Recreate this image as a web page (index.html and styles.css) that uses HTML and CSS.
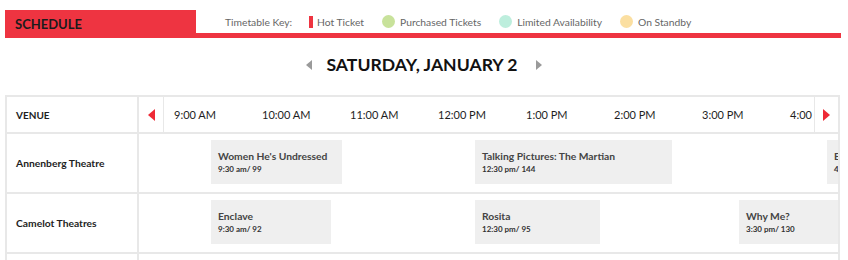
FILE: index.html
```html
<!DOCTYPE html>
<html lang="en">
<head>
<meta charset="utf-8">
<title>Schedule</title>
<link rel="stylesheet" href="styles.css">
</head>
<body>
<header class="topbar">
  <div class="brand">SCHEDULE</div>
  <div class="key">
    <span class="key-label">Timetable Key:</span>
    <span class="key-item"><span class="mark bar"></span>Hot Ticket</span>
    <span class="key-item"><span class="mark dot green"></span>Purchased Tickets</span>
    <span class="key-item"><span class="mark dot teal"></span>Limited Availability</span>
    <span class="key-item"><span class="mark dot yellow"></span>On Standby</span>
  </div>
</header>

<div class="datebar">
  <span class="nav-tri left"></span>
  <h1 class="date">SATURDAY, JANUARY 2</h1>
  <span class="nav-tri right"></span>
</div>

<div class="grid">
  <div class="row head">
    <div class="venue">VENUE</div>
    <div class="arrow-cell first"><span class="red-tri left"></span></div>
    <div class="times">
      <span class="time">9:00 AM</span>
      <span class="time">10:00 AM</span>
      <span class="time">11:00 AM</span>
      <span class="time">12:00 PM</span>
      <span class="time">1:00 PM</span>
      <span class="time">2:00 PM</span>
      <span class="time">3:00 PM</span>
      <span class="time">4:00 PM</span>
    </div>
    <div class="arrow-cell last"><span class="red-tri right"></span></div>
  </div>

  <div class="row">
    <div class="venue">Annenberg Theatre</div>
    <div class="track">
      <div class="event" style="margin-left:72px;width:131px"><div class="title">Women He's Undressed</div><div class="meta">9:30 am/ 99</div></div>
      <div class="event" style="margin-left:133px;width:197px"><div class="title">Talking Pictures: The Martian</div><div class="meta">12:30 pm/ 144</div></div>
      <div class="event" style="margin-left:155px;width:120px"><div class="title">Brooklyn</div><div class="meta">4:30 pm/ 111</div></div>
    </div>
  </div>

  <div class="row">
    <div class="venue">Camelot Theatres</div>
    <div class="track">
      <div class="event" style="margin-left:72px;width:120px"><div class="title">Enclave</div><div class="meta">9:30 am/ 92</div></div>
      <div class="event" style="margin-left:144px;width:125px"><div class="title">Rosita</div><div class="meta">12:30 pm/ 95</div></div>
      <div class="event" style="margin-left:139px;width:140px"><div class="title">Why Me?</div><div class="meta">3:30 pm/ 130</div></div>
    </div>
  </div>

  <div class="row">
    <div class="venue">Mary Pickford Theatre</div>
    <div class="track">
      <div class="event" style="margin-left:115px;width:129px"><div class="title">Mustang</div><div class="meta">10:00 am/ 97</div></div>
    </div>
  </div>
</div>
</body>
</html>
```

FILE: styles.css
```css
* { box-sizing: border-box; }

html, body {
  margin: 0;
  padding: 0;
  background: #ffffff;
}

body {
  font-family: Lato, "Open Sans", "Liberation Sans", sans-serif;
  color: #222;
  width: 848px;
  height: 260px;
  overflow: hidden;
}

/* ---------- top bar ---------- */
.topbar {
  display: flex;
  margin: 10px 0 0 5px;
  width: 836px;
  height: 28px;
}

.brand {
  width: 191px;
  height: 28px;
  background: #ee3441;
  color: #1b1b1b;
  font-weight: 700;
  font-size: 13px;
  line-height: 28px;
  padding-left: 10px;
}

.key {
  flex: 1;
  height: 28px;
  border-bottom: 5px solid #ee3441;
  display: flex;
  align-items: center;
  padding-left: 29px;
  font-size: 10.3px;
  color: #666;
}

.key-label { margin-right: 17px; }

.key-item {
  display: flex;
  align-items: center;
  margin-right: 18px;
}

.mark { display: inline-block; margin-right: 4px; }

.bar {
  width: 4px;
  height: 12px;
  background: #ee3441;
}

.dot {
  width: 13px;
  height: 13px;
  border-radius: 50%;
  margin-right: 5px;
}
.green { background: #c8e29b; }
.teal { background: #bdeedd; }
.yellow { background: #fbdfa1; }

/* ---------- date bar ---------- */
.datebar {
  display: flex;
  justify-content: center;
  align-items: center;
  padding: 16px 0 19px;
  height: 57px;
}

.date {
  margin: 0;
  font-size: 17.6px;
  line-height: 22px;
  font-weight: 700;
  color: #111;
}

.nav-tri {
  width: 0;
  height: 0;
  border-top: 5px solid transparent;
  border-bottom: 5px solid transparent;
}
.nav-tri.left { border-right: 6px solid #9a9a9a; margin-right: 14px; }
.nav-tri.right { border-left: 6px solid #9a9a9a; margin-left: 18px; }

/* ---------- grid ---------- */
.grid {
  margin-left: 5px;
  width: 835px;
  border: 2px solid #e8e8e8;
  border-bottom: 0;
}

.row {
  display: flex;
  height: 60px;
  border-bottom: 2px solid #e8e8e8;
}

.row.head { height: 37px; }

.venue {
  width: 132px;
  flex-shrink: 0;
  border-right: 2px solid #e8e8e8;
  padding-left: 9px;
  display: flex;
  align-items: center;
  font-size: 10.3px;
  font-weight: 700;
  color: #1e1e1e;
}

.row.head .venue { font-size: 10px; }

.arrow-cell {
  display: flex;
  align-items: center;
  justify-content: center;
  flex-shrink: 0;
}
.arrow-cell.first { width: 25px; border-right: 1px solid #e8e8e8; }
.arrow-cell.last { width: 24px; border-left: 1px solid #e8e8e8; }

.red-tri {
  width: 0;
  height: 0;
  border-top: 6.5px solid transparent;
  border-bottom: 6.5px solid transparent;
}
.red-tri.left { border-right: 7px solid #ee2a36; }
.red-tri.right { border-left: 7px solid #ee2a36; }

.times {
  flex: 1;
  display: flex;
  align-items: center;
  padding-left: 10px;
  overflow: hidden;
  white-space: nowrap;
}

.time {
  width: 88px;
  flex-shrink: 0;
  font-size: 11px;
  color: #1e1e1e;
}

.track {
  flex: 1;
  display: flex;
  align-items: flex-start;
  padding-top: 6px;
  overflow: hidden;
}

.event {
  flex-shrink: 0;
  height: 44px;
  background: #efefef;
  padding: 9px 0 0 7px;
  white-space: nowrap;
  overflow: hidden;
}

.title {
  font-size: 10.3px;
  font-weight: 700;
  color: #444;
  line-height: 14px;
}

.meta {
  font-size: 8px;
  font-weight: 700;
  color: #333;
  line-height: 12px;
}
```
